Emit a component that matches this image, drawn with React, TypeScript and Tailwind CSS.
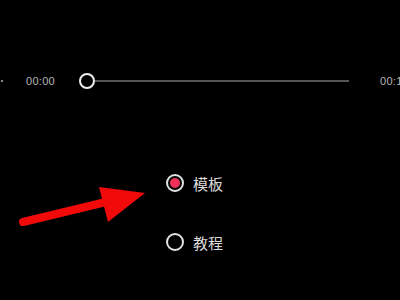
import React from 'react';

const Radio = ({ checked, label }: { checked?: boolean; label: string }) => (
  <div className="flex items-center h-[18px]">
    <div className="w-[18px] h-[18px] rounded-full border-2 border-[#e2e2e2] flex items-center justify-center">
      {checked && <div className="w-[10px] h-[10px] rounded-full bg-[#ee3158]"></div>}
    </div>
    <span className="ml-[9px] text-[15px] leading-none text-[#dcdcdc] font-['Noto_Sans_CJK_SC',sans-serif]">
      {label}
    </span>
  </div>
);

export default function App() {
  return (
    <div className="relative w-[400px] h-[300px] bg-black overflow-hidden font-['Liberation_Sans',sans-serif]">
      {/* Timeline */}
      <div className="flex items-center h-[16px] mt-[73px] whitespace-nowrap">
        <div className="flex-none w-[2px] h-[2px] ml-[1px] bg-[#888]"></div>
        <span className="flex-none ml-[23px] text-[11px] tracking-[0.3px] text-[#b5b5b5]">00:00</span>
        <div className="flex-none ml-[24px] w-[16px] h-[16px] rounded-full border-2 border-[#eeeeee] bg-black"></div>
        <div className="flex-none w-[254px] h-[2px] bg-[#555555]"></div>
        <span className="flex-none ml-[31px] text-[11px] tracking-[0.3px] text-[#b5b5b5]">00:10</span>
      </div>

      {/* Options */}
      <div className="flex flex-col gap-[41px] mt-[85px] ml-[166px]">
        <Radio checked label="模板" />
        <Radio label="教程" />
      </div>

      {/* Annotation arrow */}
      <svg className="absolute inset-0" width="400" height="300" viewBox="0 0 400 300">
        <line x1="23" y1="222" x2="106" y2="202" stroke="#f20a0a" strokeWidth="8" strokeLinecap="round" />
        <polygon points="99,187 145,193 108,222" fill="#f20a0a" />
      </svg>
    </div>
  );
}
